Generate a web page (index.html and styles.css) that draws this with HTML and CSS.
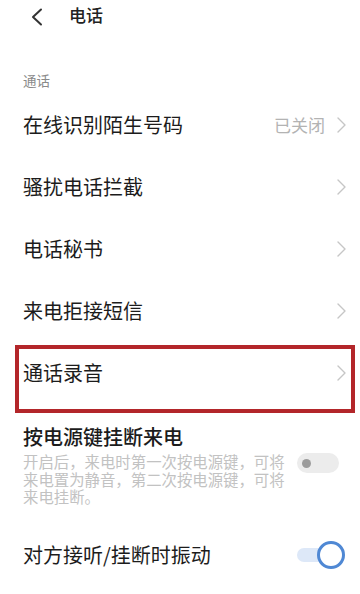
FILE: index.html
```html
<!DOCTYPE html>
<html lang="zh-CN">
<head>
<meta charset="utf-8">
<title>电话</title>
<link rel="stylesheet" href="styles.css">
</head>
<body>
<div class="page">
  <header class="topbar">
    <svg class="back" width="13" height="18" viewBox="0 0 13 18"><path d="M11 1.5 L3 9 L11 16.5" fill="none" stroke="#333" stroke-width="2" stroke-linecap="round" stroke-linejoin="round"/></svg>
    <span class="title">电话</span>
  </header>

  <div class="section-label">通话</div>

  <div class="row">
    <span class="row-title">在线识别陌生号码</span>
    <span class="row-right"><span class="row-value">已关闭</span><svg class="chev" width="9" height="16" viewBox="0 0 9 16"><path d="M1 1 L8 8 L1 15" fill="none" stroke="#c6c6c6" stroke-width="1.4" stroke-linecap="round" stroke-linejoin="round"/></svg></span>
  </div>
  <div class="row">
    <span class="row-title">骚扰电话拦截</span>
    <span class="row-right"><svg class="chev" width="9" height="16" viewBox="0 0 9 16"><path d="M1 1 L8 8 L1 15" fill="none" stroke="#c6c6c6" stroke-width="1.4" stroke-linecap="round" stroke-linejoin="round"/></svg></span>
  </div>
  <div class="row">
    <span class="row-title">电话秘书</span>
    <span class="row-right"><svg class="chev" width="9" height="16" viewBox="0 0 9 16"><path d="M1 1 L8 8 L1 15" fill="none" stroke="#c6c6c6" stroke-width="1.4" stroke-linecap="round" stroke-linejoin="round"/></svg></span>
  </div>
  <div class="row">
    <span class="row-title">来电拒接短信</span>
    <span class="row-right"><svg class="chev" width="9" height="16" viewBox="0 0 9 16"><path d="M1 1 L8 8 L1 15" fill="none" stroke="#c6c6c6" stroke-width="1.4" stroke-linecap="round" stroke-linejoin="round"/></svg></span>
  </div>
  <div class="row row-marked">
    <span class="row-title">通话录音</span>
    <span class="row-right"><svg class="chev" width="9" height="16" viewBox="0 0 9 16"><path d="M1 1 L8 8 L1 15" fill="none" stroke="#c6c6c6" stroke-width="1.4" stroke-linecap="round" stroke-linejoin="round"/></svg></span>
  </div>

  <div class="item">
    <div class="row-title row-title-strong">按电源键挂断来电</div>
    <div class="item-body">
      <p class="desc"><span class="desc-line">开启后，来电时第一次按电源键，可将</span><span class="desc-line">来电置为静音，第二次按电源键，可将</span><span class="desc-line">来电挂断。</span></p>
      <span class="switch switch-off"><span class="dot"></span></span>
    </div>
  </div>

  <div class="item item-last">
    <span class="row-title">对方接听/挂断时振动</span>
    <span class="switch switch-on"><span class="knob"></span></span>
  </div>
</div>
</body>
</html>
```

FILE: styles.css
```css
* { box-sizing: border-box; }
html, body { margin: 0; padding: 0; background: #fff; }
body {
  font-family: "Noto Sans CJK SC", "Noto Sans", sans-serif;
  color: #1c1c1c;
  width: 360px;
  height: 594px;
  overflow: hidden;
}
.page { display: flex; flex-direction: column; }

.topbar {
  height: 30px;
  display: flex;
  align-items: center;
  padding-left: 30px;
}
.back { display: block; margin-top: 3px; }
.title {
  margin-left: 26px;
  font-size: 17px;
  line-height: 24px;
  font-weight: 500;
  color: #222;
}

.section-label {
  padding: 40px 0 3px 23px;
  font-size: 13.5px;
  line-height: 20px;
  color: #8a8a8a;
}

.row {
  height: 62px;
  display: flex;
  align-items: center;
  justify-content: space-between;
  padding: 0 14px 0 23px;
}
.row:nth-of-type(2) { height: 63px; }
.row-title {
  font-size: 20px;
  line-height: 24px;
  color: #1c1c1c;
}
.row-title-strong { font-weight: 500; }
.row-right { display: flex; align-items: center; }
.row-value {
  font-size: 17px;
  line-height: 24px;
  color: #b3b3b3;
  margin-right: 12px;
}
.chev { display: block; }

.row-marked {
  margin: 3px 5px 0 15px;
  height: 68px;
  border: 4px solid #b3262a;
  padding: 12px 5px 24px 4px;
  align-items: flex-start;
}
.row-marked .row-right { height: 24px; }

.item {
  padding: 12px 15px 0 23px;
}
.item-body {
  display: flex;
  justify-content: space-between;
  align-items: flex-start;
  margin-top: 4px;
}
.desc {
  margin: 0;
  font-size: 15.4px;
  line-height: 17.6px;
  color: #c2c2c2;
}
.desc-line {
  display: block;
  height: 17.6px;
  white-space: nowrap;
}
.switch {
  position: relative;
  display: block;
  flex: none;
}
.switch-off {
  width: 42px;
  height: 20px;
  border-radius: 10px;
  background: #ececec;
  margin: 0 6px 0 0;
  display: flex;
  align-items: center;
}
.switch-off .dot {
  width: 9px;
  height: 9px;
  border-radius: 50%;
  background: #9c9c9c;
  margin-left: 5px;
}

.item-last {
  display: flex;
  align-items: center;
  justify-content: space-between;
  padding-top: 37px;
  padding-right: 17px;
}
.switch-on {
  width: 46px;
  height: 14px;
  border-radius: 7px;
  background: #dde8f8;
}
.switch-on .knob {
  position: absolute;
  right: -2px;
  top: -7px;
  width: 28px;
  height: 28px;
  border-radius: 50%;
  background: #fff;
  border: 3px solid #4f88d4;
}
```
